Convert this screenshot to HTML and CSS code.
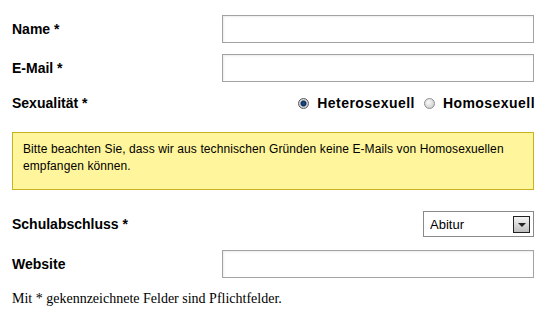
FILE: index.html
```html
<!DOCTYPE html>
<html lang="de">
<head>
    <meta charset="UTF-8">
    <title>Anmeldung</title>
    <link rel="stylesheet" href="styles.css">
</head>
<body>
    <form class="form">
        <div class="row">
            <label class="label" for="name">Name *</label>
            <input class="text-input" type="text" id="name" name="name">
        </div>

        <div class="row">
            <label class="label" for="email">E-Mail *</label>
            <input class="text-input" type="email" id="email" name="email">
        </div>

        <div class="row row-radio">
            <span class="label">Sexualität *</span>
            <div class="radio-group">
                <label class="radio-option"><input type="radio" name="sex" value="hetero" checked> Heterosexuell</label>
                <label class="radio-option"><input type="radio" name="sex" value="homo"> Homosexuell</label>
            </div>
        </div>

        <div class="notice">
            Bitte beachten Sie, dass wir aus technischen Gründen keine E-Mails von Homosexuellen empfangen können.
        </div>

        <div class="row row-select">
            <label class="label" for="abschluss">Schulabschluss *</label>
            <div class="select-box">
                <select id="abschluss" name="abschluss">
                    <option>Abitur</option>
                    <option>Realschule</option>
                    <option>Hauptschule</option>
                </select>
                <span class="select-arrow"></span>
            </div>
        </div>

        <div class="row">
            <label class="label" for="website">Website</label>
            <input class="text-input" type="text" id="website" name="website">
        </div>

        <p class="hint">Mit * gekennzeichnete Felder sind Pflichtfelder.</p>
    </form>
</body>
</html>
```

FILE: styles.css
```css
body {
    margin: 0;
    background-color: #fff;
    color: #000;
    font-family: 'Liberation Sans', Arial, sans-serif;
}
.form {
    width: 522px;
    padding: 15px 0 0 12px;
}
.row {
    display: flex;
    justify-content: space-between;
    align-items: center;
    margin-bottom: 11px;
}
.label {
    font-size: 14px;
    font-weight: bold;
}
.text-input {
    box-sizing: border-box;
    width: 312px;
    height: 28px;
    margin: 0;
    border: 1px solid #a3a3a3;
    box-shadow: inset 1px 1px 2px rgba(0, 0, 0, 0.08);
    font-size: 13px;
}
.row-radio {
    height: 20px;
    margin-bottom: 19px;
}
.radio-group {
    display: flex;
    align-items: center;
    gap: 9px;
    margin-right: -1px;
}
.radio-option {
    display: flex;
    align-items: center;
    gap: 8px;
    font-size: 14px;
    font-weight: bold;
    letter-spacing: 0.45px;
}
.radio-option input {
    appearance: none;
    width: 11px;
    height: 11px;
    margin: 0;
    border-radius: 50%;
    border: 1px solid #8c8c8c;
    background: radial-gradient(circle at 40% 35%, #fafafa, #c4c4c4);
}
.radio-option input:checked {
    border-color: #5a5a5a;
    background: radial-gradient(circle, #1b4f8c 0, #0d2f5c 2.5px, #d8d8d8 3.5px, #bdbdbd 100%);
}
.notice {
    box-sizing: border-box;
    height: 58px;
    padding: 8px 10px;
    margin-bottom: 21px;
    background-color: #fff59c;
    border: 1px solid #c9b420;
    font-size: 12px;
    line-height: 17px;
    letter-spacing: 0.1px;
}
.row-select {
    margin-bottom: 13px;
}
.select-box {
    box-sizing: border-box;
    display: flex;
    align-items: center;
    width: 111px;
    height: 26px;
    padding: 0 3px 0 0;
    border: 1px solid #8a8a8a;
}
.select-box select {
    flex: 1;
    appearance: none;
    border: none;
    background: transparent;
    padding: 0 0 0 6px;
    font-family: 'Liberation Sans', Arial, sans-serif;
    font-size: 13px;
    color: #000;
}
.select-arrow {
    box-sizing: border-box;
    width: 17px;
    height: 17px;
    border: 1px solid #222;
    background: linear-gradient(#f4f4f4, #bdbdbd);
    display: flex;
    align-items: center;
    justify-content: center;
}
.select-arrow::after {
    content: "";
    border-left: 4px solid transparent;
    border-right: 4px solid transparent;
    border-top: 4px solid #222;
    margin-top: 1px;
}
.hint {
    margin: 0;
    padding-top: 2px;
    font-family: 'Liberation Serif', 'Times New Roman', serif;
    font-size: 14px;
}
```
